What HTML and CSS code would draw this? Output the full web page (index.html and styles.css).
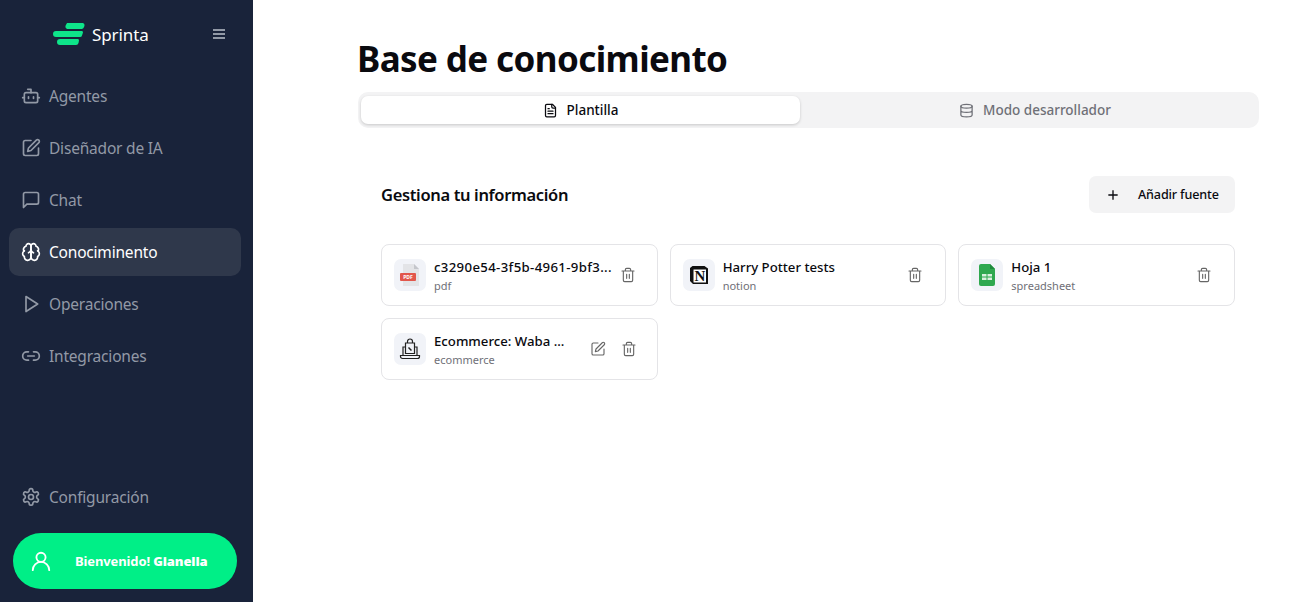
FILE: index.html
```html
<!DOCTYPE html>
<html lang="es">
<head>
<meta charset="utf-8">
<title>Base de conocimiento</title>
<link rel="stylesheet" href="styles.css">
</head>
<body>
<div class="app">
  <aside class="sidebar">
    <div class="brand">
      <svg class="logo" width="33" height="24" viewBox="1 0 33 24"><path d="M15 1h16a2.500 2.500 0 0 1 1.500 2.800L32 5a2.500 2.500 0 0 1-2 2H15a2.800 2.800 0 0 1-1.600-3z" fill="#0ee58a"/><path d="M4 9h26a1.500 1.500 0 0 1 1 1.500l-1 3a2 2 0 0 1-2 1.500H4a3 3 0 0 1 0-6z" fill="#0ee58a"/><path d="M8 17h18a1.500 1.500 0 0 1 1 1.500l-.5 2.500a2.500 2.500 0 0 1-2.500 2H8a3 3 0 0 1 0-6z" fill="#0ee58a"/></svg>
      <span class="brand-name">Sprinta</span>
      <svg class="burger" width="14" height="12" viewBox="0 0 14 12"><path d="M1 2h12M1 6h12M1 10h12" stroke="#9299a6" stroke-width="1.800" fill="none"/></svg>
    </div>
    <nav class="nav">
      <a class="nav-item"><svg class="ni" viewBox="0 0 24 24"><path d="M12 8V4H8"/><rect x="4" y="8" width="16" height="12" rx="2"/><path d="M2 14h2M20 14h2M15 13v2M9 13v2"/></svg>Agentes</a>
      <a class="nav-item"><svg class="ni" viewBox="0 0 24 24"><path d="M12 3H5a2 2 0 0 0-2 2v14a2 2 0 0 0 2 2h14a2 2 0 0 0 2-2v-7"/><path d="M18.400 2.600a2.100 2.100 0 1 1 3 3L12 15l-4 1 1-4z"/></svg>Diseñador de IA</a>
      <a class="nav-item"><svg class="ni" viewBox="0 0 24 24"><path d="M21 15a2 2 0 0 1-2 2H7l-4 4V5a2 2 0 0 1 2-2h14a2 2 0 0 1 2 2z"/></svg>Chat</a>
      <a class="nav-item active"><svg class="ni" viewBox="0 0 24 24"><path d="M12 5a3 3 0 1 0-5.997.125 4 4 0 0 0-2.526 5.770 4 4 0 0 0 .556 6.588A4 4 0 1 0 12 18Z"/><path d="M12 5a3 3 0 1 1 5.997.125 4 4 0 0 1 2.526 5.770 4 4 0 0 1-.556 6.588A4 4 0 1 1 12 18Z"/><path d="M15 13a4.500 4.500 0 0 1-3-4 4.500 4.500 0 0 1-3 4"/><path d="M3.477 10.896a4 4 0 0 1 .585-.396M19.938 10.500a4 4 0 0 1 .585.396"/></svg>Conociminento</a>
      <a class="nav-item"><svg class="ni" viewBox="0 0 24 24"><path d="M6 3l14 9-14 9z"/></svg>Operaciones</a>
      <a class="nav-item"><svg class="ni" viewBox="0 0 24 24"><path d="M9 17H7A5 5 0 0 1 7 7h2M15 7h2a5 5 0 0 1 0 10h-2M8 12h8"/></svg>Integraciones</a>
    </nav>
    <a class="nav-item settings"><svg class="ni" viewBox="0 0 24 24"><path d="M12.200 2h-.4a2 2 0 0 0-2 2v.2a2 2 0 0 1-1 1.700l-.4.300a2 2 0 0 1-2 0l-.2-.1a2 2 0 0 0-2.700.7l-.2.400a2 2 0 0 0 .7 2.700l.2.100a2 2 0 0 1 1 1.700v.5a2 2 0 0 1-1 1.700l-.2.100a2 2 0 0 0-.7 2.700l.2.400a2 2 0 0 0 2.700.7l.2-.1a2 2 0 0 1 2 0l.4.300a2 2 0 0 1 1 1.700v.2a2 2 0 0 0 2 2h.4a2 2 0 0 0 2-2v-.2a2 2 0 0 1 1-1.700l.4-.3a2 2 0 0 1 2 0l.2.100a2 2 0 0 0 2.700-.7l.2-.4a2 2 0 0 0-.7-2.700l-.2-.1a2 2 0 0 1-1-1.700v-.5a2 2 0 0 1 1-1.700l.2-.1a2 2 0 0 0 .7-2.700l-.2-.4a2 2 0 0 0-2.700-.7l-.2.100a2 2 0 0 1-2 0l-.4-.3a2 2 0 0 1-1-1.700V4a2 2 0 0 0-2-2z"/><circle cx="12" cy="12" r="3"/></svg>Configuración</a>
    <div class="welcome">
      <svg class="welcome-icon" viewBox="0 0 24 24"><circle cx="12" cy="8" r="5"/><path d="M3 22a9 9 0 0 1 18 0"/></svg>
      <span class="welcome-text">Bienvenido! <b>Gianella</b></span>
    </div>
  </aside>
  <main class="main">
    <h1 class="title">Base de conocimiento</h1>
    <div class="tabs">
      <div class="tab on"><svg class="ti" viewBox="0 0 24 24"><path d="M15 2H6a2 2 0 0 0-2 2v16a2 2 0 0 0 2 2h12a2 2 0 0 0 2-2V7z"/><path d="M14 2v4a2 2 0 0 0 2 2h4M8 9h2M8 13h8M8 17h8"/></svg>Plantilla</div>
      <div class="tab"><svg class="ti" viewBox="0 0 24 24"><ellipse cx="12" cy="5" rx="9" ry="3"/><path d="M3 5v14c0 1.700 4 3 9 3s9-1.300 9-3V5M3 12c0 1.700 4 3 9 3s9-1.300 9-3"/></svg>Modo desarrollador</div>
    </div>
    <section class="panel">
      <div class="panel-head">
        <h2 class="panel-title">Gestiona tu información</h2>
        <button class="add"><svg class="plus" viewBox="0 0 24 24"><path d="M5 12h14M12 5v14"/></svg>Añadir fuente</button>
      </div>
      <div class="grid">
        <article class="card first">
          <div class="thumb"><svg width="22" height="24" viewBox="0 0 22 24"><path d="M4 1h11l5 5v17H4z" fill="#e3e4e7"/><path d="M15 1l5 5h-5z" fill="#c4c6cb"/><rect x="1" y="10" width="16" height="8" rx="1" fill="#e2574c"/><text x="9" y="16" class="pdf">PDF</text></svg></div>
          <div class="meta"><div class="name hash">c3290e54-3f5b-4961-9bf3...</div><div class="kind">pdf</div></div>
          <svg class="act" viewBox="0 0 24 24"><path d="M3 6h18M19 6v14a2 2 0 0 1-2 2H7a2 2 0 0 1-2-2V6M8 6V4a2 2 0 0 1 2-2h4a2 2 0 0 1 2 2v2M10 11v6M14 11v6"/></svg>
        </article>
        <article class="card">
          <div class="thumb"><svg width="20" height="20" viewBox="0 0 20 20"><path d="M1 3L3.500 1h12L19 3.500V19H4L1 16z" fill="#111"/><path d="M4.500 4.500h12.500v13H4.500z" fill="#fff"/><text x="10.800" y="16" class="notion">N</text></svg></div>
          <div class="meta"><div class="name">Harry Potter tests</div><div class="kind">notion</div></div>
          <svg class="act" viewBox="0 0 24 24"><path d="M3 6h18M19 6v14a2 2 0 0 1-2 2H7a2 2 0 0 1-2-2V6M8 6V4a2 2 0 0 1 2-2h4a2 2 0 0 1 2 2v2M10 11v6M14 11v6"/></svg>
        </article>
        <article class="card">
          <div class="thumb"><svg width="16" height="22" viewBox="0 0 16 22"><path d="M2 0h9l5 5v15a2 2 0 0 1-2 2H2a2 2 0 0 1-2-2V2a2 2 0 0 1 2-2z" fill="#2fa84f"/><path d="M11 0l5 5h-5z" fill="#1f8a3c"/><path d="M3 10h10v6H3z" fill="#d8f0de"/><path d="M8 10v6M3 13h10" stroke="#2fa84f"/></svg></div>
          <div class="meta"><div class="name">Hoja 1</div><div class="kind">spreadsheet</div></div>
          <svg class="act" viewBox="0 0 24 24"><path d="M3 6h18M19 6v14a2 2 0 0 1-2 2H7a2 2 0 0 1-2-2V6M8 6V4a2 2 0 0 1 2-2h4a2 2 0 0 1 2 2v2M10 11v6M14 11v6"/></svg>
        </article>
        <article class="card tight">
          <div class="thumb"><svg width="22" height="22" viewBox="0 0 22 22" fill="none" stroke="#222" stroke-width="1.200"><path d="M8.500 5V3.500a2.500 2.500 0 0 1 5 0V5M6.500 5h9v10.500h-9z"/><path d="M6.500 9H4v8.500M15.500 9H18v8.500"/><path d="M1.500 17.500h19v1a2 2 0 0 1-2 2h-15a2 2 0 0 1-2-2z"/><path d="M9.500 9.500l3 3" stroke-width="1.500"/></svg></div>
          <div class="meta"><div class="name">Ecommerce: Waba ...</div><div class="kind">ecommerce</div></div>
          <svg class="act edit" viewBox="0 0 24 24"><path d="M12 3H5a2 2 0 0 0-2 2v14a2 2 0 0 0 2 2h14a2 2 0 0 0 2-2v-7"/><path d="M18.400 2.600a2.100 2.100 0 1 1 3 3L12 15l-4 1 1-4z"/></svg>
          <svg class="act" viewBox="0 0 24 24"><path d="M3 6h18M19 6v14a2 2 0 0 1-2 2H7a2 2 0 0 1-2-2V6M8 6V4a2 2 0 0 1 2-2h4a2 2 0 0 1 2 2v2M10 11v6M14 11v6"/></svg>
        </article>
      </div>
    </section>
  </main>
</div>
</body>
</html>
```
FILE: styles.css
```css
* { box-sizing: border-box; }
html, body { margin: 0; height: 100%; }
body { font-family: "Noto Sans", sans-serif; background: #fff; color: #0a0a0f; overflow: hidden; }
.app { display: flex; height: 602px; }
.sidebar { width: 253px; flex: none; background: #19233a; display: flex; flex-direction: column; padding: 0 12px 0 9px; }
.brand { height: 68px; display: flex; align-items: center; padding-left: 44px; flex: none; }
.logo { flex: none; margin-right: 6px; }
.brand-name { font-size: 17px; letter-spacing: -.1px; color: #fff; }
.burger { margin-left: auto; margin-right: 15px; }
.nav { display: flex; flex-direction: column; gap: 4px; margin-top: 4px; }
.nav-item { height: 48px; display: flex; align-items: center; gap: 8px; padding-left: 12px; border-radius: 10px; color: #9299a6; font-size: 15.500px; letter-spacing: -.2px; }
.nav-item.active { background: #2f384b; color: #fff; }
.ni { width: 20px; height: 20px; flex: none; fill: none; stroke: currentColor; stroke-width: 2; stroke-linecap: round; stroke-linejoin: round; }
.settings { margin-top: auto; }
.welcome { height: 56px; margin: 12px 4px 13px 4px; flex: none; border-radius: 28px; background: #00ef87; display: flex; align-items: center; padding-left: 17px; color: #fff; }
.welcome-icon { width: 22px; height: 22px; flex: none; fill: none; stroke: #fff; stroke-width: 2; margin-right: 23px; stroke-linecap: round; }
.welcome-text { font-size: 13px; font-weight: 700; letter-spacing: -.12px; white-space: nowrap; }
.main { flex: 1; padding: 36px 54px 0 105px; }
.title { margin: 0 0 0 -1px; font-size: 35px; letter-spacing: -.6px; line-height: 46px; font-weight: 700; }
.tabs { margin-top: 10px; height: 36px; background: #f3f3f4; border-radius: 10px; padding: 3px; display: grid; grid-template-columns: 439px 1fr; gap: 14px; }
.tab { display: flex; align-items: center; justify-content: center; gap: 9px; font-size: 13.500px; font-weight: 500; color: #6f7077; border-radius: 7px; }
.tab.on { background: #fff; color: #0a0a0f; box-shadow: 0 1px 3px rgba(0,0,0,.18); margin-bottom: 1px; margin-top: 1px; }
.ti { width: 15px; height: 15px; fill: none; stroke: currentColor; stroke-width: 2; stroke-linecap: round; stroke-linejoin: round; }
.panel { padding: 48px 24px 0 23px; }
.panel-head { display: flex; justify-content: space-between; align-items: center; height: 37px; }
.panel-title { margin: 0; font-size: 16.500px; letter-spacing: -.35px; font-weight: 600; }
.add { height: 37px; width: 146px; border: 0; border-radius: 7px; background: #f3f3f4; font: 500 12.600px "Noto Sans", sans-serif; letter-spacing: -.15px; color: #0a0a0f; display: flex; align-items: center; gap: 17px; padding: 0 0 0 16px; }
.plus { width: 16px; height: 16px; fill: none; stroke: currentColor; stroke-width: 2; flex: none; }
.grid { margin-top: 31px; display: grid; grid-template-columns: repeat(3, 1fr); gap: 12px; }
.card { height: 62px; border: 1px solid #e4e4e7; border-radius: 8px; display: flex; align-items: center; padding: 0 22px 0 12px; min-width: 0; }
.first { padding-right: 21px; }
.tight { padding-right: 20px; }
.thumb { width: 32px; height: 32px; flex: none; border-radius: 7px; background: #f1f3f8; display: flex; align-items: center; justify-content: center; margin-right: 8px; }
.meta { flex: 1; min-width: 0; padding-top: 3px; }
.name { font-size: 13.200px; font-weight: 500; line-height: 18px; white-space: nowrap; }
.hash { letter-spacing: .35px; }
.kind { font-size: 11px; line-height: 19px; color: #6f7077; }
.act { width: 16px; height: 16px; flex: none; fill: none; stroke: #666; stroke-width: 1.700; stroke-linecap: round; stroke-linejoin: round; }
.edit { margin-right: 15px; }
.pdf { font: 700 5px "Noto Sans", sans-serif; fill: #fff; text-anchor: middle; }
.notion { font: 700 15px "Liberation Serif", serif; fill: #111; text-anchor: middle; }
```
